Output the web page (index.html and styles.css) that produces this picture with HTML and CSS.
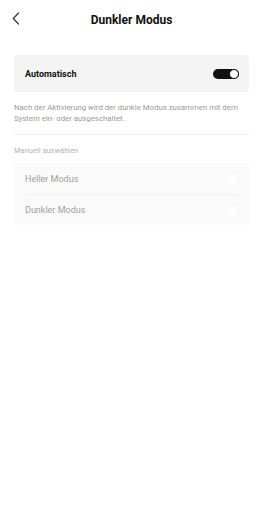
FILE: index.html
```html
<!DOCTYPE html>
<html lang="de">
<head>
<meta charset="utf-8">
<link rel="stylesheet" href="styles.css">
</head>
<body>
<div class="screen">
  <header class="topbar">
    <svg class="back" width="8" height="13" viewBox="0 0 8 13"><path d="M6.5 1 L1.3 6.5 L6.5 12" fill="none" stroke="#333" stroke-width="1.2" stroke-linecap="round" stroke-linejoin="round"/></svg>
    <h1 class="title">Dunkler Modus</h1>
  </header>
  <main class="content">
    <div class="card auto">
      <span class="auto-label">Automatisch</span>
      <span class="toggle"><span class="knob"></span></span>
    </div>
    <p class="desc">Nach der Aktivierung wird der dunkle Modus zusammen mit dem System ein- oder ausgeschaltet.</p>
    <div class="section-label">Manuell auswählen</div>
    <div class="card manual">
      <div class="row"><span class="row-label">Heller Modus</span><span class="radio"></span></div>
      <div class="row"><span class="row-label">Dunkler Modus</span><span class="radio"></span></div>
    </div>
  </main>
</div>
</body>
</html>
```
FILE: styles.css
```css
html, body { margin: 0; padding: 0; background: #fff; }
body { font-family: Roboto, "Noto Sans", sans-serif; width: 263px; height: 525px; }
.screen { display: flex; flex-direction: column; }
.topbar { position: relative; height: 40px; display: flex; align-items: center; justify-content: center; }
.back { position: absolute; left: 12px; top: 12px; }
.title { margin: 0; font-size: 12px; font-weight: 700; color: #111; line-height: 1; }
.content { padding: 0 14px; display: flex; flex-direction: column; }
.card { border-radius: 4px; }
.auto { margin-top: 15px; height: 37px; background: #f4f4f4; display: flex; align-items: center; justify-content: space-between; padding: 0 10px 0 11px; }
.auto-label { font-size: 9px; font-weight: 700; color: #111; }
.toggle { width: 26px; height: 10px; border-radius: 5px; background: #111; display: flex; align-items: center; justify-content: flex-end; }
.knob { border-radius: 50%; background: #fff; border: 1px solid #111; box-sizing: border-box; width: 10px; height: 10px; }
.desc { margin: 10px 0 0; padding-bottom: 10px; border-bottom: 1px solid #f3f3f3; font-size: 7.8px; line-height: 11px; color: #9a9a9a; }
.section-label { margin-top: 11px; font-size: 7.5px; line-height: 10px; color: #b5b5b5; }
.manual { margin-top: 7px; background: #fafafa; padding: 0 11px; }
.row { height: 31px; display: flex; align-items: center; justify-content: space-between; }
.row + .row { border-top: 1px solid #f0f0f0; height: 30px; }
.row-label { font-size: 9px; color: #9e9e9e; }
.radio { width: 11px; height: 11px; border-radius: 50%; background: #fff; box-shadow: 0 0 1.5px rgba(0,0,0,0.1); }
```
